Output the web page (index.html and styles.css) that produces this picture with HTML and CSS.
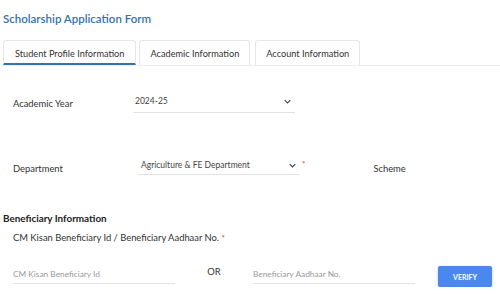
FILE: index.html
```html
<!DOCTYPE html>
<html lang="en">

<head>
    <meta charset="UTF-8">
    <meta name="viewport" content="width=device-width, initial-scale=1.0">
    <title>Scholarship Application Form</title>
    <link rel="stylesheet" href="styles.css">
</head>

<body>
    <div class="page">
        <h1 class="page-title">Scholarship Application Form</h1>

        <div class="tabs">
            <div class="tab active">Student Profile Information</div>
            <div class="tab">Academic Information</div>
            <div class="tab">Account Information</div>
        </div>

        <div class="form-row row-year">
            <label class="field-label">Academic Year</label>
            <div class="select-box">
                <span>2024-25</span>
                <svg class="chevron" viewBox="0 0 10 6" width="7" height="5">
                    <path d="M1 1 L5 5 L9 1" fill="none" stroke="#444" stroke-width="1.6" />
                </svg>
            </div>
        </div>

        <div class="form-row row-dept">
            <label class="field-label">Department</label>
            <div class="select-wrap">
                <div class="select-box">
                    <span>Agriculture &amp; FE Department</span>
                    <svg class="chevron" viewBox="0 0 10 6" width="7" height="5">
                        <path d="M1 1 L5 5 L9 1" fill="none" stroke="#444" stroke-width="1.6" />
                    </svg>
                </div>
                <span class="required">*</span>
            </div>
            <label class="field-label scheme">Scheme</label>
        </div>

        <h3 class="section-title">Beneficiary Information</h3>
        <div class="sub-label">CM Kisan Beneficiary Id / Beneficiary Aadhaar No. <span class="required">*</span></div>

        <div class="verify-row">
            <input type="text" class="text-input" placeholder="CM Kisan Beneficiary Id">
            <span class="or">OR</span>
            <input type="text" class="text-input" placeholder="Beneficiary Aadhaar No.">
            <button type="button" class="verify-button">VERIFY</button>
        </div>
    </div>
</body>

</html>
```

FILE: styles.css
```css
body,
html {
    margin: 0;
    padding: 0;
    background: #fff;
    font-family: Lato, "Open Sans", sans-serif;
    color: #333;
}

.page {
    padding: 0 0 0 3px;
}

.page-title {
    margin: 0;
    padding-top: 11px;
    font-size: 11.5px;
    font-weight: 600;
    color: #3572b0;
    height: 16px;
    line-height: 16px;
}

/* tabs */
.tabs {
    display: flex;
    margin-top: 13px;
    border-bottom: 1px solid #ececec;
    height: 25px;
}

.tab {
    box-sizing: border-box;
    height: 25px;
    line-height: 25px;
    padding: 0 10px;
    margin-right: 3px;
    font-size: 9.2px;
    color: #333;
    border: 1px solid #e6e6e6;
    border-bottom: none;
    border-radius: 3px 3px 0 0;
}

.tab:first-child {
    padding: 0 11px;
}

.tab:last-child {
    margin-left: 2px;
}

.tab.active {
    border-bottom: 2px solid #3572b0;
}

/* form rows */
.form-row {
    display: flex;
    align-items: flex-start;
    font-size: 9.4px;
    line-height: 14px;
}

.field-label {
    padding-left: 10px;
    color: #333;
}

.row-year {
    margin-top: 28px;
}

.row-year .field-label {
    width: 120px;
    margin-top: 3px;
}

.row-dept {
    margin-top: 45px;
}

.row-dept .field-label {
    width: 125px;
    margin-top: 4px;
}

.select-box {
    box-sizing: border-box;
    width: 162px;
    display: flex;
    justify-content: space-between;
    align-items: center;
    padding: 0 4px 4px 2px;
    border-bottom: 1px solid #e2e2e2;
    font-size: 8.5px;
    line-height: 14px;
    color: #444;
}

.row-dept .select-box {
    padding-bottom: 2px;
    padding-left: 3px;
}

.select-wrap {
    display: flex;
    align-items: flex-start;
}

.required {
    color: #e53935;
    font-size: 8px;
    line-height: 10px;
    margin-left: 2px;
}

.row-dept .required {
    margin-top: 1px;
}

.sub-label .required {
    margin-left: 0;
}

.scheme {
    width: auto;
    margin-left: 58px;
}

/* beneficiary */
.section-title {
    margin: 35px 0 0;
    font-size: 9.9px;
    line-height: 14px;
    font-weight: 700;
    color: #222;
}

.sub-label {
    margin-top: 6px;
    padding-left: 10px;
    font-size: 9.4px;
    line-height: 14px;
    color: #333;
}

.verify-row {
    display: flex;
    align-items: flex-start;
    margin-top: 19px;
    padding-left: 10px;
}

.text-input {
    box-sizing: border-box;
    width: 162px;
    height: 20px;
    border: none;
    border-bottom: 1px solid #e2e2e2;
    padding: 1px 0 1px;
    font-family: Lato, sans-serif;
    font-size: 8.3px;
    outline: none;
}

.text-input::placeholder {
    color: #999;
}

.or {
    width: 78px;
    margin-top: 1px;
    text-align: center;
    font-size: 9.4px;
    line-height: 14px;
    color: #333;
}

.verify-button {
    margin-left: 23px;
    margin-top: 2px;
    width: 54px;
    height: 21px;
    padding: 0;
    border: none;
    border-radius: 2px;
    background-color: #4a88f0;
    color: #fff;
    font-family: Lato, sans-serif;
    font-size: 7px;
    font-weight: 700;
    box-shadow: 0 1px 3px rgba(0, 0, 0, 0.25);
    cursor: pointer;
}
```
